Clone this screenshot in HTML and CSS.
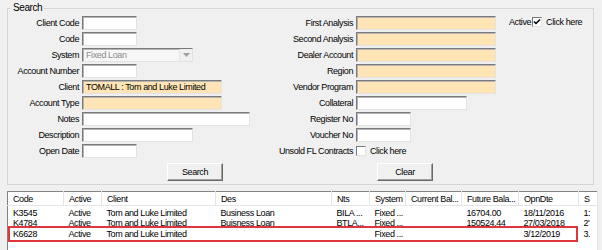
FILE: index.html
```html
<!DOCTYPE html>
<html lang="en">
  <head>
    <meta charset="UTF-8" />
    <title>Loan Search</title>
    <link rel="stylesheet" href="styles.css">
  </head>
  <body>
    <fieldset class="search-box">
      <legend>Search</legend>
      <div class="search-cols">
        <div class="field-block left-block">
          <div class="field-grid">
            <label>Client Code</label><span class="txt w55"></span>
            <label>Code</label><span class="txt w55"></span>
            <label>System</label>
            <span class="txt w111 combo disabled">Fixed Loan
              <span class="combo-btn">
                <svg width="7" height="4" viewBox="0 0 7 4"><polygon points="0 0 7 0 3.5 4" fill="#a0a0a0"></polygon></svg>
              </span>
            </span>
            <label>Account Number</label><span class="txt w55"></span>
            <label>Client</label><span class="txt w140 req">TOMALL : Tom and Luke Limited</span>
            <label>Account Type</label><span class="txt w140 req"></span>
            <label>Notes</label><span class="txt w168"></span>
            <label>Description</label><span class="txt w111"></span>
            <label>Open Date</label><span class="txt w55"></span>
          </div>
          <div class="btn-row search-row"><button>Search</button></div>
        </div>

        <div class="field-block right-block">
          <div class="field-grid">
            <label>First Analysis</label><span class="txt w140 req"></span>
            <label>Second Analysis</label><span class="txt w140 req"></span>
            <label>Dealer Account</label><span class="txt w140 req"></span>
            <label>Region</label><span class="txt w140 req"></span>
            <label>Vendor Program</label><span class="txt w140 req"></span>
            <label>Collateral</label><span class="txt w111"></span>
            <label>Register No</label><span class="txt w55"></span>
            <label>Voucher No</label><span class="txt w55"></span>
            <label>Unsold FL Contracts</label>
            <span class="check-line"><span class="check"></span>Click here</span>
          </div>
          <div class="btn-row clear-row"><button>Clear</button></div>
        </div>

        <div class="active-block">
          <span class="check-line">Active<span class="check checked">
            <svg width="8" height="8" viewBox="0 0 8 8"><polyline points="1 3.5 3 5.5 7 1.5" fill="none" stroke="#000" stroke-width="1.5"></polyline></svg>
          </span>Click here</span>
        </div>
      </div>
    </fieldset>

    <div class="list-wrap">
      <table class="list">
        <colgroup>
          <col style="width:56px"><col style="width:38px"><col style="width:114px"><col style="width:116px">
          <col style="width:38px"><col style="width:36px"><col style="width:56px"><col style="width:57px">
          <col style="width:60px"><col>
        </colgroup>
        <thead>
          <tr>
            <th>Code</th><th>Active</th><th>Client</th><th>Des</th><th>Nts</th>
            <th>System</th><th>Current Bal...</th><th>Future Bala...</th><th>OpnDte</th><th>S</th>
          </tr>
        </thead>
        <tbody>
          <tr>
            <td>K3545</td><td>Active</td><td>Tom and Luke Limited</td><td>Business Loan</td><td>BILA ...</td>
            <td>Fixed ...</td><td></td><td class="num">16704.00</td><td>18/11/2016</td><td>1:</td>
          </tr>
          <tr>
            <td>K4784</td><td>Active</td><td>Tom and Luke Limited</td><td>Buisness Loan</td><td>BTLA...</td>
            <td>Fixed ...</td><td></td><td class="num">150524.44</td><td>27/03/2018</td><td>2'</td>
          </tr>
          <tr>
            <td>K6628</td><td>Active</td><td>Tom and Luke Limited</td><td></td><td></td>
            <td>Fixed ...</td><td></td><td class="num"></td><td>3/12/2019</td><td>3.</td>
          </tr>
          <tr class="filler"><td colspan="10"></td></tr>
        </tbody>
      </table>
      <div class="highlight"></div>
    </div>
  </body>
</html>
```

FILE: styles.css
```css
body {
  margin: 0;
  padding-top: 2px;
  background-color: #f0f0f0;
  font-family: "Liberation Sans", Arial, sans-serif;
  font-size: 9px;
  letter-spacing: -0.4px;
  color: #000;
  overflow: hidden;
}
.search-box {
  margin: 0 8px 0 7px;
  padding: 1px 0 3px 0;
  border: 1px solid #d5d5d5;
  min-width: 0;
}
.search-box legend {
  margin-left: 3px;
  padding: 0 2px;
  line-height: 12px;
  font-size: 10px;
}
.search-cols {
  display: flex;
}
.left-block {
  width: 262px;
}
.right-block {
  width: 230px;
}
.field-grid {
  display: grid;
  grid-auto-rows: 16px;
  column-gap: 3px;
  align-items: center;
}
.left-block .field-grid {
  grid-template-columns: 71px 1fr;
}
.right-block .field-grid {
  grid-template-columns: 83px 1fr;
}
.field-grid label {
  text-align: right;
  white-space: nowrap;
}
.txt {
  box-sizing: border-box;
  display: block;
  height: 14px;
  background-color: #fff;
  border: 1px solid;
  border-color: #7a7a7a #e3e3e3 #e3e3e3 #7a7a7a;
  box-shadow: inset 1px 1px 0 #b4b4b4;
  padding: 0 3px;
  line-height: 12px;
  white-space: nowrap;
  overflow: hidden;
}
.w55 { width: 55px; }
.w111 { width: 111px; }
.w140 { width: 140px; }
.w168 { width: 168px; }
.req {
  background-color: #ffe4b5;
}
.combo {
  display: flex;
  justify-content: space-between;
  align-items: center;
  padding-right: 0;
}
.disabled {
  background-color: #f7f7f7;
  color: #8a8a8a;
}
.combo-btn {
  display: flex;
  align-items: center;
  justify-content: center;
  width: 12px;
  height: 12px;
  background-color: #f0f0f0;
  border-left: 1px solid #e3e3e3;
}
.btn-row {
  margin-top: 4px;
}
.search-row {
  padding-left: 159px;
}
.clear-row {
  padding-left: 107px;
}
button {
  width: 56px;
  height: 18px;
  padding: 0;
  font: inherit;
  letter-spacing: inherit;
  color: #000;
  background-color: #f0f0f0;
  border: 1px solid;
  border-color: #fff #696969 #696969 #fff;
  box-shadow: inset -1px -1px 0 #a0a0a0;
}
.check-line {
  display: flex;
  align-items: center;
  white-space: nowrap;
}
.check {
  box-sizing: border-box;
  display: flex;
  align-items: center;
  justify-content: center;
  width: 10px;
  height: 10px;
  margin-right: 4px;
  background-color: #fff;
  border: 1px solid;
  border-color: #7a7a7a #e3e3e3 #e3e3e3 #7a7a7a;
}
.active-block {
  padding: 2px 0 0 9px;
}
.active-block .check {
  margin-left: 1px;
}
.list-wrap {
  position: relative;
  margin: 6px 4px 0 7px;
}
.list {
  width: 100%;
  table-layout: fixed;
  border-collapse: collapse;
  background-color: #fff;
  border: 1px solid;
  border-color: #828282 #e3e3e3 #e3e3e3 #828282;
}
.list th {
  height: 13px;
  padding: 0 0 0 5px;
  font-weight: normal;
  text-align: left;
  white-space: nowrap;
  overflow: hidden;
  border-right: 1px solid #e5e5e5;
  border-bottom: 1px solid #e5e5e5;
}
.list td {
  height: 10px;
  padding: 0 0 0 5px;
  line-height: 10px;
  white-space: nowrap;
  overflow: hidden;
}
.list tbody tr:first-child td {
  padding-top: 2px;
}
.list tbody tr:nth-child(3) td {
  padding-top: 1px;
}
.list td.num {
  text-align: right;
  padding-right: 20px;
}
.list .filler td {
  height: 40px;
}
.highlight {
  position: absolute;
  left: 1px;
  top: 35px;
  width: 570px;
  height: 16px;
  box-sizing: border-box;
  border: 2px solid #e0353d;
}
```
